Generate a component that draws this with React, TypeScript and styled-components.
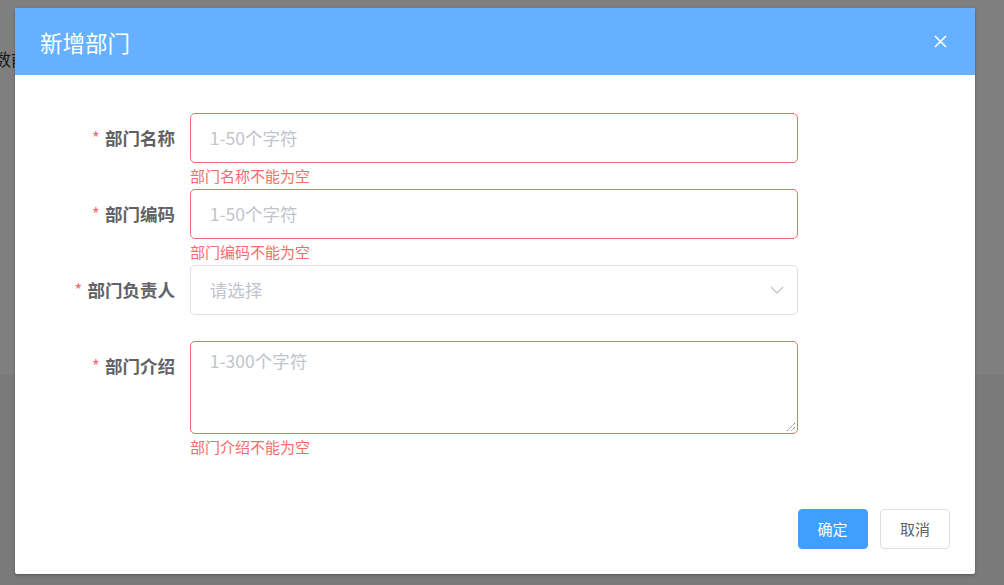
import styled, { createGlobalStyle } from "styled-components";

const GlobalStyle = createGlobalStyle`
  html, body {
    margin: 0;
    padding: 0;
    font-family: "Noto Sans CJK SC", "Noto Sans", sans-serif;
  }
  * {
    box-sizing: border-box;
  }
`;

const Page = styled.div`
  width: 1004px;
  height: 585px;
  background: #f5f5f5;
  overflow: hidden;
  position: relative;
`;

const PageTop = styled.div`
  height: 375px;
  background: #ffffff;
  padding-top: 47px;
`;

const PageText = styled.span`
  display: block;
  margin-left: -6px;
  font-size: 17px;
  line-height: 24px;
  color: #303133;
  white-space: nowrap;
`;

const Overlay = styled.div`
  position: absolute;
  inset: 0;
  background: rgba(0, 0, 0, 0.5);
`;

const Dialog = styled.div`
  position: absolute;
  left: 15px;
  top: 8px;
  width: 960px;
  background: #ffffff;
  border-radius: 2px;
  box-shadow: 0 1px 3px rgba(0, 0, 0, 0.3);
  overflow: hidden;
`;

const Header = styled.div`
  height: 67px;
  background: #66b1ff;
  display: flex;
  align-items: center;
  justify-content: space-between;
  padding: 0 25px;
`;

const Title = styled.span`
  font-size: 22.5px;
  line-height: 30px;
  color: #ffffff;
`;

const CloseButton = styled.button`
  border: none;
  background: none;
  padding: 0;
  width: 16px;
  height: 16px;
  display: flex;
  align-items: center;
  justify-content: center;
  cursor: pointer;
  margin-right: 2px;
`;

const Body = styled.div`
  padding: 37.5px 25px 36.5px;
`;

const FormItem = styled.div`
  display: flex;
`;

const Label = styled.label`
  width: 150px;
  flex-shrink: 0;
  padding-right: 15px;
  text-align: right;
  font-size: 17.5px;
  font-weight: bold;
  color: #606266;
  line-height: 50px;
  white-space: nowrap;

  &::before {
    content: "*";
    color: #f56c6c;
    margin-right: 5px;
    font-weight: normal;
  }
`;

const Field = styled.div`
  width: 608px;
`;

const Control = styled.div<{ $error?: boolean; $tall?: boolean }>`
  position: relative;
  height: ${(p) => (p.$tall ? "93px" : "50px")};
  border: 1px solid ${(p) => (p.$error ? "#f56c6c" : "#dcdfe6")};
  border-radius: 5px;
  background: #ffffff;
  display: flex;
  align-items: ${(p) => (p.$tall ? "flex-start" : "center")};
  padding: ${(p) => (p.$tall ? "6px 18.75px" : "0 18.75px")};
`;

const Placeholder = styled.span`
  flex: 1;
  font-size: 17.5px;
  line-height: 26px;
  color: #c0c4cc;
`;

const Message = styled.div`
  height: 26px;
  padding-top: 4px;
  font-size: 15px;
  line-height: 18px;
  color: #f56c6c;
`;

const Resize = styled.svg`
  position: absolute;
  right: 1px;
  bottom: 1px;
`;

const Footer = styled.div`
  display: flex;
  justify-content: flex-end;
  gap: 12.5px;
  padding: 12.5px 25px 25px;
`;

const Button = styled.button<{ $primary?: boolean }>`
  width: 70px;
  height: 40px;
  border-radius: 4px;
  font-family: inherit;
  font-size: 15px;
  cursor: pointer;
  border: 1px solid ${(p) => (p.$primary ? "#409eff" : "#dcdfe6")};
  background: ${(p) => (p.$primary ? "#409eff" : "#ffffff")};
  color: ${(p) => (p.$primary ? "#ffffff" : "#606266")};
`;

const fields = [
  { label: "部门名称", placeholder: "1-50个字符", error: "部门名称不能为空" },
  { label: "部门编码", placeholder: "1-50个字符", error: "部门编码不能为空" },
];

const App = () => {
  return (
    <Page>
      <GlobalStyle />
      <PageTop>
        <PageText>数前</PageText>
      </PageTop>
      <Overlay />
      <Dialog>
        <Header>
          <Title>新增部门</Title>
          <CloseButton>
            <svg width="13" height="13" viewBox="0 0 13 13">
              <path d="M1 1L12 12M12 1L1 12" stroke="#ffffff" strokeWidth="1.6" />
            </svg>
          </CloseButton>
        </Header>
        <Body>
          {fields.map((f) => (
            <FormItem key={f.label}>
              <Label>{f.label}</Label>
              <Field>
                <Control $error>
                  <Placeholder>{f.placeholder}</Placeholder>
                </Control>
                <Message>{f.error}</Message>
              </Field>
            </FormItem>
          ))}
          <FormItem>
            <Label>部门负责人</Label>
            <Field>
              <Control>
                <Placeholder>请选择</Placeholder>
                <svg width="14" height="8" viewBox="0 0 14 8" style={{ marginRight: -6 }}>
                  <path d="M1 1L7 7L13 1" stroke="#c0c4cc" strokeWidth="1.3" fill="none" />
                </svg>
              </Control>
              <Message />
            </Field>
          </FormItem>
          <FormItem>
            <Label>部门介绍</Label>
            <Field>
              <Control $error $tall>
                <Placeholder>1-300个字符</Placeholder>
                <Resize width="11" height="11" viewBox="0 0 11 11">
                  <path d="M10 2L2 10M10 6L6 10" stroke="#555" strokeWidth="1" strokeDasharray="1 1" />
                </Resize>
              </Control>
              <Message>部门介绍不能为空</Message>
            </Field>
          </FormItem>
        </Body>
        <Footer>
          <Button $primary>确定</Button>
          <Button>取消</Button>
        </Footer>
      </Dialog>
    </Page>
  );
};

export default App;
